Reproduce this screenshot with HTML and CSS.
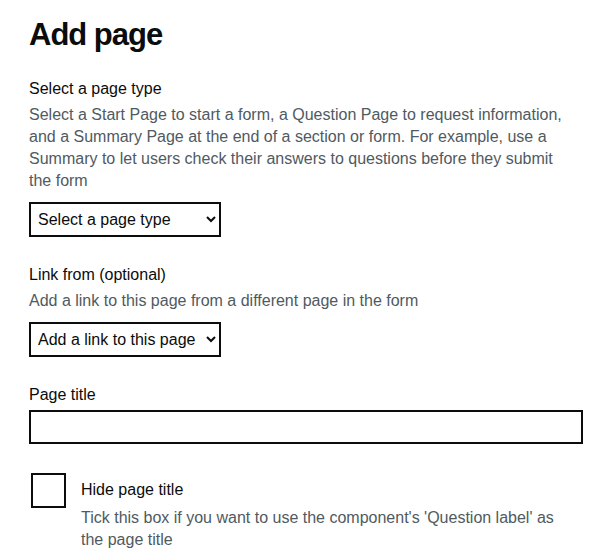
FILE: index.html
```html
<!DOCTYPE html>
<html lang="en">
<head>
<meta charset="utf-8">
<title>Add page</title>
<link rel="stylesheet" href="styles.css">
</head>
<body>
<main class="page">
  <h1 class="heading">Add page</h1>

  <div class="group">
    <label class="label" for="page-type">Select a page type</label>
    <div class="hint hint-wide">Select a Start Page to start a form, a Question Page to request information, and a Summary Page at the end of a section or form. For example, use a Summary to let users check their answers to questions before they submit the form</div>
    <select class="select" id="page-type">
      <option>Select a page type</option>
    </select>
  </div>

  <div class="group">
    <label class="label" for="link-from">Link from (optional)</label>
    <div class="hint">Add a link to this page from a different page in the form</div>
    <select class="select" id="link-from">
      <option>Add a link to this page</option>
    </select>
  </div>

  <div class="group">
    <label class="label label-input" for="page-title">Page title</label>
    <input class="input" id="page-title" type="text">
  </div>

  <div class="checkbox-item">
    <input class="checkbox" id="hide-title" type="checkbox">
    <div class="checkbox-text">
      <label class="label checkbox-label" for="hide-title">Hide page title</label>
      <div class="hint checkbox-hint">Tick this box if you want to use the component's 'Question label' as the page title</div>
    </div>
  </div>
</main>
</body>
</html>
```

FILE: styles.css
```css
html, body {
  margin: 0;
  padding: 0;
  background: #ffffff;
}

.page {
  font-family: "Liberation Sans", Arial, sans-serif;
  color: #0b0c0c;
  padding: 15px 19px 0 29px;
  width: 554px;
}

.heading {
  font-size: 31px;
  line-height: 40px;
  font-weight: 700;
  letter-spacing: -1px;
  margin: 0 0 23px 0;
}

.group {
  display: flex;
  flex-direction: column;
  align-items: flex-start;
  margin-bottom: 27px;
}

.label {
  display: block;
  font-size: 16px;
  line-height: 22px;
  margin-bottom: 4px;
}

.label-input {
  margin-bottom: 4px;
}

.hint {
  font-size: 16px;
  line-height: 22px;
  color: #505a5f;
  margin-bottom: 10px;
}

.hint-wide {
  max-width: 540px;
}

.select {
  width: 192px;
  height: 35px;
  box-sizing: border-box;
  border: 2px solid #0b0c0c;
  border-radius: 0;
  background: #ffffff;
  color: #0b0c0c;
  font-family: "Liberation Sans", Arial, sans-serif;
  font-size: 16px;
  padding: 0 4px 0 3px;
}

.input {
  width: 554px;
  height: 34px;
  box-sizing: border-box;
  border: 2px solid #0b0c0c;
  border-radius: 0;
  margin: 0;
  padding: 0 6px;
  font-size: 16px;
}

.checkbox-item {
  display: flex;
  align-items: flex-start;
  gap: 15px;
  padding-top: 2px;
}

.checkbox {
  appearance: none;
  -webkit-appearance: none;
  flex: none;
  width: 35px;
  height: 35px;
  box-sizing: border-box;
  border: 2px solid #0b0c0c;
  border-radius: 0;
  background: #ffffff;
  margin: 0 0 0 2px;
}

.checkbox-text {
  max-width: 485px;
}

.checkbox-label {
  margin-top: 6px;
  margin-bottom: 6px;
}

.checkbox-hint {
  margin-bottom: 0;
}
```
